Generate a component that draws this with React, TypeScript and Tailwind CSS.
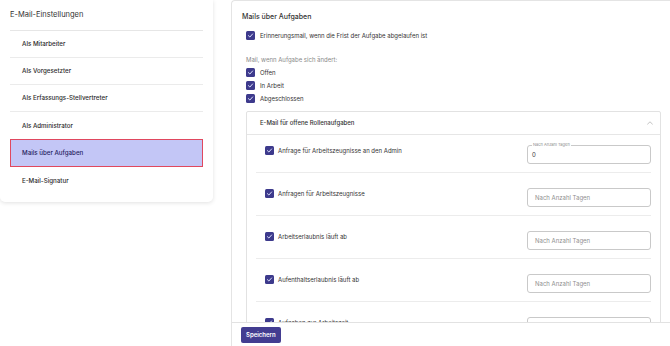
import React from 'react';

const menu = [
  'Als Mitarbeiter',
  'Als Vorgesetzter',
  'Als Erfassungs-Stellvertreter',
  'Als Administrator',
  'Mails über Aufgaben',
  'E-Mail-Signatur',
];

const rows = [
  { label: 'Anfrage für Arbeitszeugnisse an den Admin', value: '0' },
  { label: 'Anfragen für Arbeitszeugnisse', value: '' },
  { label: 'Arbeitserlaubnis läuft ab', value: '' },
  { label: 'Aufenthaltserlaubnis läuft ab', value: '' },
  { label: 'Aufgaben zur Arbeitszeit', value: '' },
];

const Check: React.FC = () => (
  <span className="flex h-[9px] w-[9px] shrink-0 items-center justify-center rounded-[1.5px] bg-[#3d3a8c]">
    <svg viewBox="0 0 10 10" className="h-[7px] w-[7px]">
      <path d="M2 5.2 L4.1 7.2 L8 2.8" fill="none" stroke="#dfe3ff" strokeWidth="1.4" strokeLinecap="round" strokeLinejoin="round" />
    </svg>
  </span>
);

const CheckRow: React.FC<{ label: string }> = ({ label }) => (
  <div className="flex h-[13px] items-center gap-[5px]">
    <Check />
    <span className="text-[6px] text-[#333]">{label}</span>
  </div>
);

export default function App() {
  return (
    <div className="flex h-[346px] w-[670px] overflow-hidden bg-white font-['Inter',sans-serif] text-[#2f2f2f]">
      {/* Sidebar */}
      <div className="w-[231px] shrink-0 pr-[18px]">
        <div className="rounded-b-[5px] bg-white px-[10px] pb-[8px] shadow-[0_1px_4px_rgba(0,0,0,0.12)]">
          <div className="flex h-[31px] items-center border-b border-[#e6e6e6] text-[7.5px] text-[#333]">
            E-Mail-Einstellungen
          </div>
          {menu.map((item, i) =>
            item === 'Mails über Aufgaben' ? (
              <div
                key={item}
                className="flex h-[28px] items-center border border-[#e0485f] bg-[#c3c6f6] pl-[11px] text-[6.2px] font-medium text-[#25235e]"
              >
                {item}
              </div>
            ) : (
              <div
                key={item}
                className={`flex h-[27px] items-center pl-[12px] text-[6.2px] font-medium text-[#2b2b2b] ${
                  i < 3 ? 'border-b border-[#ebebeb]' : ''
                }`}
              >
                {item}
              </div>
            )
          )}
        </div>
      </div>

      {/* Main panel */}
      <div className="flex h-[346px] flex-1 flex-col rounded-tl-[4px] border-l border-t border-[#e4e4e4]">
        <div className="flex-1 overflow-hidden pl-[10px] pr-[9px]">
          <div className="pt-[11px] text-[7px] font-medium text-[#333]">Mails über Aufgaben</div>
          <div className="mt-[6px] pl-[4px]">
            <CheckRow label="Erinnerungsmail, wenn die Frist der Aufgabe abgelaufen ist" />
          </div>
          <div className="mt-[13px] pl-[4px] text-[6px] text-[#8a8a8a]">Mail, wenn Aufgabe sich ändert:</div>
          <div className="mt-[2px] pl-[4px]">
            <CheckRow label="Offen" />
            <CheckRow label="In Arbeit" />
            <CheckRow label="Abgeschlossen" />
          </div>

          {/* Accordion */}
          <div className="ml-[4px] mt-[6px] rounded-[2px] border border-[#e2e2e2]">
            <div className="flex h-[23px] items-center justify-between border-b border-[#e6e6e6] pl-[13px] pr-[6px]">
              <span className="text-[6px] font-medium text-[#333]">E-Mail für offene Rollenaufgaben</span>
              <svg viewBox="0 0 10 6" className="h-[4px] w-[8px]">
                <path d="M1 5 L5 1.2 L9 5" fill="none" stroke="#9a9a9a" strokeWidth="0.9" />
              </svg>
            </div>
            <div className="px-[9px]">
              {rows.map((row, i) => (
                <div
                  key={row.label}
                  className={`flex items-start justify-between border-b border-[#ececec] pb-[8px] ${
                    i === 0 ? 'pt-[10px]' : 'pt-[15px]'
                  }`}
                >
                  <div className="flex items-center gap-[4px] pl-[9px] pt-[1px]">
                    <Check />
                    <span className="text-[6px] text-[#333]">{row.label}</span>
                  </div>
                  <div className="relative h-[19px] w-[124px] rounded-[3px] border border-[#c9c9c9]">
                    {row.value ? (
                      <>
                        <span className="absolute left-[4px] top-[-4px] bg-white px-[1px] text-[4px] leading-[6px] text-[#8a8a8a]">
                          Nach Anzahl Tagen
                        </span>
                        <span className="absolute left-[4px] top-[5px] text-[6px] leading-[8px] text-[#333]">{row.value}</span>
                      </>
                    ) : (
                      <span className="absolute left-[7px] top-[5px] text-[6px] leading-[8px] text-[#8f8f8f]">
                        Nach Anzahl Tagen
                      </span>
                    )}
                  </div>
                </div>
              ))}
            </div>
          </div>
        </div>

        {/* Footer */}
        <div className="flex h-[24px] shrink-0 items-center border-t border-[#e2e2e2] bg-white pl-[9px]">
          <button className="flex h-[16px] items-center rounded-[2px] bg-[#433d91] px-[5px] text-[6px] font-semibold text-white">
            Speichern
          </button>
        </div>
      </div>
    </div>
  );
}
